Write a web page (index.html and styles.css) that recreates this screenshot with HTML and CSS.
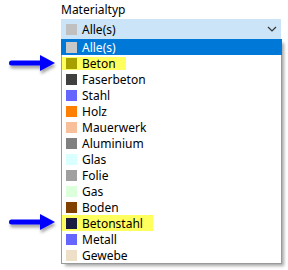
FILE: index.html
```html
<!DOCTYPE html>
<html>
<head>
<meta charset="utf-8">
<link rel="stylesheet" href="styles.css">
</head>
<body>
<div class="field">
  <div class="label">Materialtyp</div>
  <div class="combo">
    <span class="sw" style="background:#c0c0c0"></span>
    <span class="txt">Alle(s)</span>
    <svg class="chev" width="10" height="6" viewBox="0 0 10 6"><polyline points="1,1 5,5 9,1" fill="none" stroke="#333" stroke-width="1.2"/></svg>
  </div>
  <ul class="list">
    <li class="row sel"><span class="item"><span class="sw" style="background:#c8c8c8"></span>Alle(s)</span></li>
    <li class="row"><span class="item hl hl-a"><span class="sw" style="background:#a6a000"></span>Beton</span></li>
    <li class="row"><span class="item"><span class="sw" style="background:#404040"></span>Faserbeton</span></li>
    <li class="row"><span class="item"><span class="sw" style="background:#6666ff"></span>Stahl</span></li>
    <li class="row"><span class="item"><span class="sw" style="background:#ff8000"></span>Holz</span></li>
    <li class="row"><span class="item"><span class="sw" style="background:#f8c09a"></span>Mauerwerk</span></li>
    <li class="row"><span class="item"><span class="sw" style="background:#808080"></span>Aluminium</span></li>
    <li class="row"><span class="item"><span class="sw" style="background:#d9ffff"></span>Glas</span></li>
    <li class="row"><span class="item"><span class="sw" style="background:#a0a0a0"></span>Folie</span></li>
    <li class="row"><span class="item"><span class="sw" style="background:#dcffdc"></span>Gas</span></li>
    <li class="row"><span class="item"><span class="sw" style="background:#804000"></span>Boden</span></li>
    <li class="row"><span class="item hl hl-b"><span class="sw" style="background:#1c1c40"></span>Betonstahl</span></li>
    <li class="row"><span class="item"><span class="sw" style="background:#6666ff"></span>Metall</span></li>
    <li class="row"><span class="item"><span class="sw" style="background:#eee0c8"></span>Gewebe</span></li>
  </ul>
</div>
<svg class="arrow arrow-1" width="60" height="24" viewBox="0 0 60 24">
  <defs><filter id="sh" x="-20%" y="-50%" width="140%" height="200%"><feDropShadow dx="1" dy="3" stdDeviation="1.5" flood-color="#000" flood-opacity="0.35"/></filter></defs>
  <g filter="url(#sh)">
    <path d="M11.5 5.5 H41 V10.5 H11.5 A2.5 2.5 0 0 1 11.5 5.5 Z" fill="#0000ff"/>
    <polygon points="40,0 55,8 40,16" fill="#0000ff"/>
  </g>
</svg>
<svg class="arrow arrow-2" width="60" height="24" viewBox="0 0 60 24">
  <g filter="url(#sh)">
    <path d="M11.5 5.5 H41 V10.5 H11.5 A2.5 2.5 0 0 1 11.5 5.5 Z" fill="#0000ff"/>
    <polygon points="40,0 55,8 40,16" fill="#0000ff"/>
  </g>
</svg>
</body>
</html>
```
FILE: styles.css
```css
html, body {
  margin: 0;
  padding: 0;
  background: #ffffff;
}
body {
  width: 288px;
  height: 270px;
  position: relative;
  overflow: hidden;
  font-family: "Noto Sans", "Open Sans", sans-serif;
  font-size: 12px;
  color: #000;
}
.field {
  padding-top: 2px;
  padding-left: 61px;
  width: 221px;
}
.label {
  height: 17px;
  line-height: 15px;
  color: #000;
}
.combo {
  height: 20px;
  width: 220px;
  background: #cce4f7;
  display: flex;
  align-items: center;
  padding-left: 5px;
  box-sizing: border-box;
}
.combo .txt {
  flex: 1;
  margin-left: 5px;
}
.chev {
  margin-right: 4px;
}
.sw {
  display: inline-block;
  width: 11px;
  height: 11px;
  flex: none;
}
.list {
  list-style: none;
  margin: 0;
  padding: 0;
  width: 221px;
  box-sizing: border-box;
  border: 1px solid #9a9a9a;
  border-top: none;
  background: #fff;
  box-shadow: 3px 3px 3px -1px rgba(0,0,0,0.35);
}
.row {
  height: 16px;
  display: flex;
  align-items: center;
}
.row.sel {
  background: #0078d7;
  color: #fff;
  margin: 0 -1px 0 -1px;
  padding-left: 1px;
}
.item {
  display: inline-flex;
  align-items: center;
  gap: 5px;
  padding-left: 4px;
  padding-right: 10px;
}
.hl {
  background: #ffff5e;
}
.hl-a {
  height: 13px;
}
.hl-b {
  height: 16px;
}
.arrow {
  position: absolute;
  left: 0;
}
.arrow-1 {
  top: 55px;
}
.arrow-2 {
  top: 214px;
}
```
